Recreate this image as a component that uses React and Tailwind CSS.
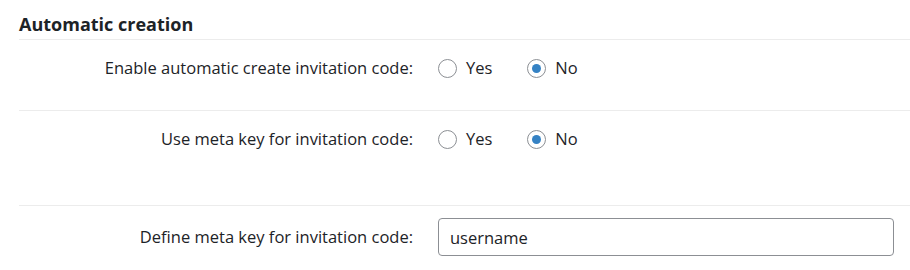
import React, { useState } from "react";

const Radio = ({ checked, label, onChange }) => (
  <label className="flex items-center gap-[9px] cursor-pointer" onClick={onChange}>
    <span className="w-[19px] h-[19px] rounded-full border border-[#8c8f94] bg-white flex items-center justify-center">
      {checked && <span className="w-[9px] h-[9px] rounded-full bg-[#3582c4]" />}
    </span>
    <span>{label}</span>
  </label>
);

const RadioRow = ({ label, value, setValue, className }) => (
  <div className={`flex border-t border-[#ececec] ${className}`}>
    <div className="w-[394px] text-right">{label}</div>
    <div className="ml-[25px] flex gap-[35px]">
      <Radio checked={value === "yes"} label="Yes" onChange={() => setValue("yes")} />
      <Radio checked={value === "no"} label="No" onChange={() => setValue("no")} />
    </div>
  </div>
);

export default function App() {
  const [auto, setAuto] = useState("no");
  const [meta, setMeta] = useState("no");

  return (
    <div
      className="w-[910px] h-[270px] bg-white pl-[19px] text-[16.5px] text-[#1d2327] overflow-hidden"
      style={{ fontFamily: '"Open Sans", "Noto Sans", sans-serif' }}
    >
      <h2 className="pt-[14px] pb-[5px] text-[18px] font-bold leading-[20px]">Automatic creation</h2>
      <RadioRow
        label="Enable automatic create invitation code:"
        value={auto}
        setValue={setAuto}
        className="pt-[18px] pb-[32px] leading-[20px]"
      />
      <RadioRow
        label="Use meta key for invitation code:"
        value={meta}
        setValue={setMeta}
        className="pt-[18px] pb-[56px] leading-[20px]"
      />
      <div className="flex items-center border-t border-[#ececec] pt-[12px] pb-[12px]">
        <div className="w-[394px] text-right">Define meta key for invitation code:</div>
        <input
          type="text"
          defaultValue="username"
          className="ml-[25px] w-[456px] h-[38px] px-[11px] border border-[#8c8f94] rounded-[4px] outline-none"
        />
      </div>
    </div>
  );
}
